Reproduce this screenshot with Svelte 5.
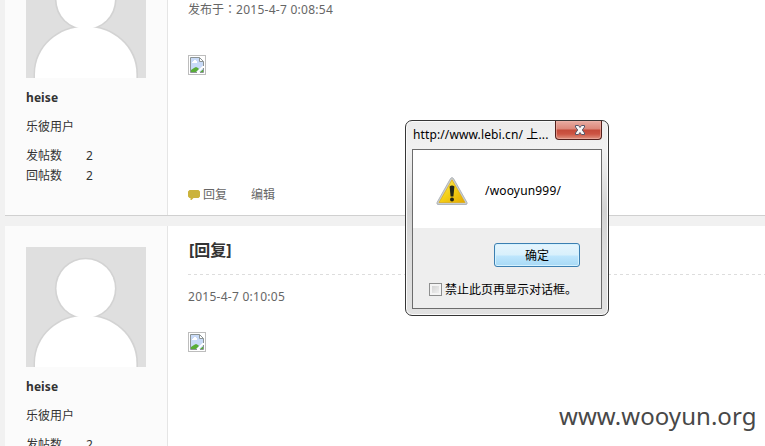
<script>
  const posts = [
    { id: 1, title: '', prefix: '发布于：', date: '2015-4-7 0:08:54', actions: true },
    { id: 2, title: '[回复]', prefix: '', date: '2015-4-7 0:10:05', actions: false }
  ];
</script>

{#snippet avatar()}
  <svg class="avatar" width="120" height="120" viewBox="0 0 120 120">
    <rect width="120" height="120" fill="#dfdfdf" />
    <g stroke="#d3d3d3" stroke-width="2.4" fill="#fff">
      <circle cx="59.7" cy="41.5" r="29.6" />
      <path d="M8.8 122V116C9 88 33 68.5 59.700 68.500S110.600 88 110.800 116V122Z" />
    </g>
    <circle cx="59.700" cy="41.500" r="29.200" fill="#fff" />
    <path d="M9 120V116C9.200 88.300 33 68.800 59.700 68.800S110.200 88.300 110.400 116V120Z" fill="#fff" />
  </svg>
{/snippet}

{#snippet brokenImage()}
  <svg class="broken" width="18" height="20" viewBox="0 0 18 20">
    <rect x=".5" y=".5" width="17" height="19" fill="#fff" stroke="#bdbdbd" />
    <path d="M3 3H11L15 7V17H3Z" fill="#c8daf7" />
    <path d="M4 8V7H5V6H6V5H8V6H9V8Z" fill="#fff" />
    <path d="M3 17V15L6 13L8 12L10 13L11 14L8 17ZM12 17L15 14.500V17Z" fill="#58ad36" />
    <path d="M8.500 17L15 10.500V13L11 17Z" fill="#fff" />
    <path d="M11.500 3L15 6.500H11.500Z" fill="#fff" />
    <path d="M9 17.500H2.500V2.500H11.500L15.500 6.500V11M11.500 2.500V6.500H15.500M15.500 13V17.500H12" fill="none" stroke="#8c9494" />
  </svg>
{/snippet}

<div class="page">
  {#each posts as post (post.id)}
    <article class="post">
      <aside>
        {@render avatar()}
        <div class="name">heise</div>
        <div class="role">乐彼用户</div>
        <div class="stat"><span>发帖数</span><span>2</span></div>
        {#if post.actions}
          <div class="stat"><span>回帖数</span><span>2</span></div>
        {/if}
      </aside>
      <section class:opening={!post.title}>
        <h2>{post.title}</h2>
        <div class="date"><span class="prefix">{post.prefix}</span><span class="stamp">{post.date}</span></div>
        {@render brokenImage()}
        {#if post.actions}
          <div class="actions">
            <svg width="12" height="10" viewBox="0 0 12 10">
              <path d="M1.500 0H10.500L12 1.500V6.500L10.500 8H5.500L3.500 10H2.500V8H1.500L0 6.500V1.500Z" fill="#cbb33c" />
            </svg>
            <span class="reply">回复</span><span>编辑</span>
          </div>
        {/if}
      </section>
    </article>
  {/each}

  <div class="dialog">
    <header>
      <span class="caption">http://www.lebi.cn/ 上...</span>
      <div class="close">
        <svg width="14" height="12" viewBox="0 0 14 12">
          <path d="M2.500 1.500H5.500L7 3.500L8.500 1.500H11.500V3L9.300 6L11.500 9V10.500H8.500L7 8.500L5.500 10.500H2.500V9L4.700 6L2.500 3Z" fill="#f8f8f8" stroke="#56576a" />
        </svg>
      </div>
    </header>
    <div class="client">
      <div class="message">
        <svg width="32" height="30" viewBox="0 0 32 30">
          <defs>
            <linearGradient id="warn" x2="1" y2="1">
              <stop offset="0" stop-color="#f9ed72" />
              <stop offset=".5" stop-color="#f4cf16" />
              <stop offset="1" stop-color="#e3a800" />
            </linearGradient>
          </defs>
          <path d="M14.500 1.500Q16 -.5 17.500 1.500L31 25.500Q31.500 27.500 30 27.500H2Q.5 27.500 1 25.500Z" fill="#c9cdd0" stroke="#a6abae" stroke-width=".8" />
          <path d="M16 2.800L29 25.500H3Z" fill="url(#warn)" stroke="#dda600" stroke-width=".6" />
          <path d="M13.600 9.500Q16 7.700 18.400 9.500L17.400 19.500H14.600Z" fill="#222519" />
          <circle cx="16" cy="22.600" r="2" fill="#222519" />
        </svg>
        <span>/wooyun999/</span>
      </div>
      <div class="buttons"><button>确定</button></div>
      <label><span class="box"></span><span class="mute">禁止此页再显示对话框。</span></label>
    </div>
  </div>

  <div class="watermark">www.wooyun.org</div>
</div>

<style>
  :global(body) { margin: 0; }
  .page {
    position: relative;
    width: 765px;
    height: 446px;
    overflow: hidden;
    background: #f1f1f1;
    font: 12px/20px "Noto Sans", "Noto Sans CJK SC", sans-serif;
    color: #333;
    display: flow-root;
  }
  .post {
    display: flex;
    box-sizing: border-box;
    height: 279px;
    margin: 0 0 10px 5px;
    background: #fff;
    border-bottom: 1px solid #d0d0d0;
  }
  .post:first-child { margin-top: -63px; }
  aside {
    box-sizing: border-box;
    width: 163px;
    padding: 21px 21px 0;
    background: #fbfbfb;
    border-right: 1px solid #e5e5e5;
  }
  svg { display: block; flex: none; }
  .name { margin-top: 10px; font-weight: 700; letter-spacing: .08px; }
  .role { margin: 9px 0; }
  .stat { display: flex; }
  .stat span:first-child { width: 60px; }
  section { flex: 1; padding-left: 20px; }
  h2 {
    box-sizing: border-box;
    height: 49px;
    margin: 0;
    padding: 10px 0 0 1px;
    font-size: 16px;
    line-height: 29px;
    background: repeating-linear-gradient(90deg, #ddd 0 3px, transparent 3px 6px) 0 100% / 100% 1px no-repeat;
  }
  .date { margin: 12px 0 25px; color: #666; white-space: nowrap; }
  .prefix { font-family: "Noto Sans CJK TC", sans-serif; line-height: 1; }
  .stamp { letter-spacing: .27px; }
  .opening .date { margin: 14px 0 35px; }
  .actions { display: flex; align-items: center; color: #666; }
  .opening .actions { margin-top: 110px; }
  .reply { margin: 0 24px 0 3px; }

  .dialog {
    position: absolute;
    left: 405px;
    top: 120px;
    box-sizing: border-box;
    width: 204px;
    height: 196px;
    padding: 0 6px 6px;
    border: 1px solid #363636;
    border-radius: 7px;
    background: linear-gradient(#ececec, #f1f1f1 28px, #e8e8e8 50px, #d2d2d2 90px, #dcdcdc 130px, #e2e2e2);
    box-shadow: inset 0 0 0 1px #fafafa;
    color: #000;
  }
  header { display: flex; height: 28px; }
  .caption {
    box-sizing: border-box;
    width: 143px;
    padding: 4px 0 0 1px;
    letter-spacing: .12px;
    white-space: nowrap;
  }
  .close {
    box-sizing: border-box;
    display: flex;
    align-items: center;
    justify-content: center;
    width: 47px;
    height: 19px;
    border: 1px solid #54201c;
    border-top: 0;
    border-radius: 0 0 4px 4px;
    background: linear-gradient(#e8aca2, #dc8779 8px, #c44a39 9px, #cc5443 13px, #e09380);
    box-shadow: inset 0 0 0 1px #efb6ab90;
  }
  .close svg { margin-left: 2px; }
  .client { box-sizing: border-box; height: 160px; border: 1px solid #6c6c6c; background: #eee; }
  .message { display: flex; height: 78px; background: #fff; }
  .message svg { margin: 27px 17px 0 23px; }
  .message span { margin-top: 31px; letter-spacing: .17px; }
  .buttons { display: flex; justify-content: flex-end; padding: 15px 21px 0 0; }
  button {
    width: 86px;
    height: 24px;
    padding: 1px 0 0;
    border: 1px solid #3c7fb1;
    border-radius: 3px;
    background: linear-gradient(#e6f5fd, #d8f0fc 11px, #bee6fd 12px, #a7d9f5);
    box-shadow: inset 0 0 0 1px #d5f2ff;
    color: #000;
    font: inherit;
    line-height: 21px;
  }
  label { display: flex; align-items: center; height: 20px; margin: 12px 0 0 16px; white-space: nowrap; }
  .mute { padding-top: 2px; }
  .box {
    box-sizing: border-box;
    width: 13px;
    height: 13px;
    margin-right: 3px;
    border: 1px solid #8e8f8f;
    background: linear-gradient(135deg, #ccc, #f6f6f6);
    box-shadow: inset 0 0 0 2px #f4f4f4;
  }
  .watermark {
    position: absolute;
    left: 559px;
    top: 398px;
    font-size: 24px;
    line-height: 36px;
    letter-spacing: .05px;
    color: #484848;
  }
</style>
